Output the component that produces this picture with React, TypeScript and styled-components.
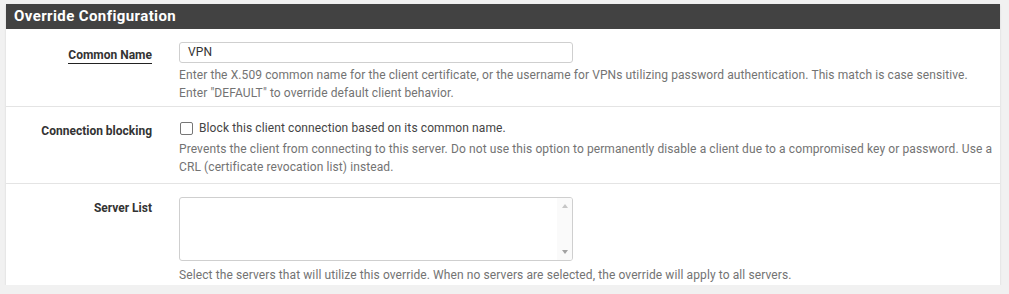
import React from "react";
import styled, { createGlobalStyle } from "styled-components";

const Global = createGlobalStyle`
  html, body { margin: 0; padding: 0; background: #f1f1f1; }
  body { font-family: Roboto, "Liberation Sans", Arial, sans-serif; }
  * { box-sizing: border-box; }
`;

const Page = styled.div`
  padding: 4px 9px 0 6px;
`;

const Panel = styled.section`
  background: #fff;
  box-shadow: 0 1px 2px rgba(0, 0, 0, 0.12);
`;

const Heading = styled.h2`
  margin: 0;
  height: 25px;
  padding: 0 8px;
  background: #424242;
  color: #fff;
  font-size: 15px;
  font-weight: 700;
  line-height: 25px;
  letter-spacing: 0.4px;
`;

const Row = styled.div<{ $pt: number; $pb: number; $last?: boolean }>`
  display: flex;
  padding: ${(p) => p.$pt}px 0 ${(p) => p.$pb}px;
  border-bottom: ${(p) => (p.$last ? "none" : "1px solid #e4e4e4")};
`;

const LabelCol = styled.div<{ $pt: number }>`
  width: 146px;
  flex: none;
  text-align: right;
  padding-top: ${(p) => p.$pt}px;
`;

const Label = styled.span<{ $underline?: boolean }>`
  font-size: 12px;
  font-weight: 700;
  color: #333;
  line-height: 16px;
  ${(p) =>
    p.$underline &&
    `border-bottom: 1px solid #222; padding-bottom: 1px;`}
`;

const Control = styled.div`
  flex: 1;
  padding-left: 27px;
  padding-right: 6px;
  display: flex;
  flex-direction: column;
  letter-spacing: 0.1px;
`;

const TextInput = styled.div`
  width: 394px;
  height: 21px;
  border: 1px solid #cfcfcf;
  border-radius: 3px;
  padding: 0 8px;
  font-size: 12px;
  line-height: 19px;
  color: #333;
`;

const Help = styled.p<{ $mt: number }>`
  margin: ${(p) => p.$mt}px 0 0;
  font-size: 12px;
  line-height: 18px;
  color: #737373;
`;

const CheckLine = styled.label`
  display: flex;
  align-items: center;
  gap: 6px;
  height: 20px;
  font-size: 12px;
  color: #444;
`;

const Box = styled.span`
  width: 13px;
  height: 13px;
  margin-left: 1px;
  border: 1px solid #767676;
  border-radius: 2px;
  background: #fff;
`;

const ListBox = styled.div`
  width: 394px;
  height: 64px;
  border: 1px solid #cfcfcf;
  border-radius: 3px;
  display: flex;
  justify-content: flex-end;
  overflow: hidden;
`;

const ScrollTrack = styled.div`
  width: 15px;
  display: flex;
  flex-direction: column;
  justify-content: space-between;
  align-items: center;
  padding: 6px 0;
  background: #fafafa;
`;

const Arrow = styled.span<{ $down?: boolean }>`
  width: 0;
  height: 0;
  border-left: 3px solid transparent;
  border-right: 3px solid transparent;
  ${(p) =>
    p.$down
      ? "border-top: 4px solid #a3a3a3;"
      : "border-bottom: 4px solid #c6c6c6;"}
`;

export default function App() {
  return (
    <>
      <Global />
      <Page>
        <Panel>
          <Heading>Override Configuration</Heading>
          <Row $pt={13} $pb={4}>
            <LabelCol $pt={2}>
              <Label $underline>Common Name</Label>
            </LabelCol>
            <Control>
              <TextInput>VPN</TextInput>
              <Help $mt={3}>
                Enter the X.509 common name for the client certificate, or the
                username for VPNs utilizing password authentication. This match
                is case sensitive.
                <br />
                Enter "DEFAULT" to override default client behavior.
              </Help>
            </Control>
          </Row>
          <Row $pt={11} $pb={7}>
            <LabelCol $pt={2}>
              <Label>Connection blocking</Label>
            </LabelCol>
            <Control>
              <CheckLine>
                <Box />
                Block this client connection based on its common name.
              </CheckLine>
              <Help $mt={2}>
                Prevents the client from connecting to this server. Do not use
                this option to permanently disable a client due to a compromised
                key or password. Use a CRL (certificate revocation list)
                instead.
              </Help>
            </Control>
          </Row>
          <Row $pt={13} $pb={1} $last>
            <LabelCol $pt={0}>
              <Label>Server List</Label>
            </LabelCol>
            <Control>
              <ListBox>
                <ScrollTrack>
                  <Arrow />
                  <Arrow $down />
                </ScrollTrack>
              </ListBox>
              <Help $mt={5}>
                Select the servers that will utilize this override. When no
                servers are selected, the override will apply to all servers.
              </Help>
            </Control>
          </Row>
        </Panel>
      </Page>
    </>
  );
}
